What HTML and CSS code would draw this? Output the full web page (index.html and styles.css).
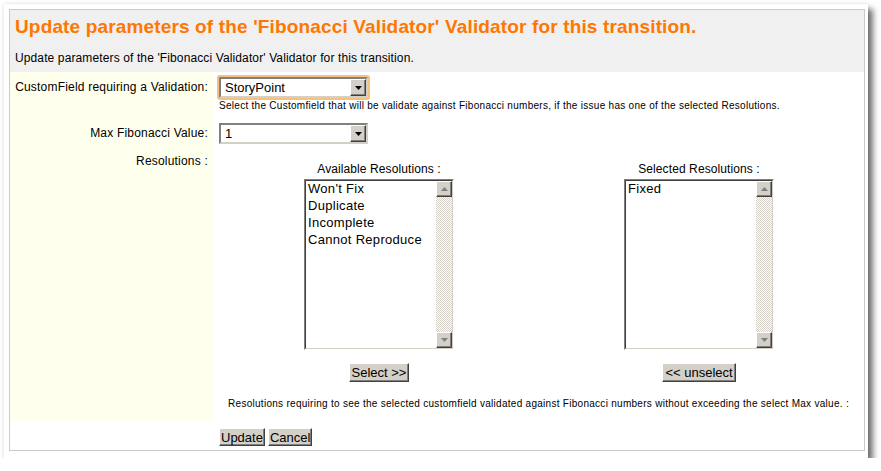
FILE: index.html
```html
<!DOCTYPE html>
<html lang="en">
<head>
  <meta charset="UTF-8">
  <title>Update parameters of the 'Fibonacci Validator' Validator</title>
  <link rel="stylesheet" href="styles.css">
</head>
<body>
  <div class="frame">
    <div class="panel">
      <div class="head">
        <h2 class="title">Update parameters of the 'Fibonacci Validator' Validator for this transition.</h2>
        <p class="desc">Update parameters of the 'Fibonacci Validator' Validator for this transition.</p>
      </div>

      <div class="form">
        <div class="label row-first">CustomField requiring a Validation:</div>
        <div class="value row-first">
          <div class="select focused">
            <span class="select-text">StoryPoint</span>
            <span class="drop"><svg width="7" height="4"><polygon points="0,0 7,0 3.5,4" fill="#000"/></svg></span>
          </div>
          <div class="help">Select the Customfield that will be validate against Fibonacci numbers, if the issue has one of the selected Resolutions.</div>
        </div>

        <div class="label row-max">Max Fibonacci Value:</div>
        <div class="value row-max">
          <div class="select">
            <span class="select-text">1</span>
            <span class="drop"><svg width="7" height="4"><polygon points="0,0 7,0 3.5,4" fill="#000"/></svg></span>
          </div>
        </div>

        <div class="label row-res">Resolutions :</div>
        <div class="value row-res">
          <div class="picker">
            <div class="pick-col">
              <div class="caption">Available Resolutions :</div>
              <div class="listbox">
                <div class="listbox-inner">
                  <ul class="options">
                    <li>Won't Fix</li>
                    <li>Duplicate</li>
                    <li>Incomplete</li>
                    <li>Cannot Reproduce</li>
                  </ul>
                  <div class="scroll">
                    <span class="sb-btn"><svg width="7" height="4"><polygon points="0,4 7,4 3.5,0" fill="#808080"/></svg></span>
                    <span class="sb-btn"><svg width="7" height="4"><polygon points="0,0 7,0 3.5,4" fill="#808080"/></svg></span>
                  </div>
                </div>
              </div>
              <button class="btn btn-move">Select &gt;&gt;</button>
            </div>
            <div class="pick-col">
              <div class="caption">Selected Resolutions :</div>
              <div class="listbox">
                <div class="listbox-inner">
                  <ul class="options">
                    <li>Fixed</li>
                  </ul>
                  <div class="scroll">
                    <span class="sb-btn"><svg width="7" height="4"><polygon points="0,4 7,4 3.5,0" fill="#808080"/></svg></span>
                    <span class="sb-btn"><svg width="7" height="4"><polygon points="0,0 7,0 3.5,4" fill="#808080"/></svg></span>
                  </div>
                </div>
              </div>
              <button class="btn btn-move">&lt;&lt; unselect</button>
            </div>
          </div>
          <div class="note">Resolutions requiring to see the selected customfield validated against Fibonacci numbers without exceeding the select Max value. :</div>
        </div>

        <div class="label label-plain"></div>
        <div class="value row-actions">
          <button class="btn">Update</button><button class="btn">Cancel</button>
        </div>
      </div>
    </div>
  </div>
</body>
</html>
```

FILE: styles.css
```css
body {
  margin: 0;
  background: #fff;
  font-family: "Liberation Sans", Arial, sans-serif;
  color: #000;
}
.frame {
  margin: 4px 0 0 4px;
  width: 864px;
  box-sizing: border-box;
  padding: 5px 3px 7px 5px;
  background: #fff;
  box-shadow: 5px 5px 6px rgba(0,0,0,0.55), 0 0 4px rgba(0,0,0,0.12);
}
.panel {
  border: 1px solid #cacaca;
}
.head {
  background: #f0f0f0;
  height: 62px;
  box-sizing: border-box;
  padding: 6px 5px 0;
}
.title {
  margin: 0;
  font-size: 19px;
  line-height: 22px;
  font-weight: bold;
  letter-spacing: 0.15px;
  color: #ff7700;
}
.desc {
  margin: 13px 0 0;
  font-size: 12px;
  line-height: 15px;
  letter-spacing: 0.12px;
}
.form {
  display: grid;
  grid-template-columns: 203px 1fr;
}
.label {
  background: #ffffee;
  text-align: right;
  font-size: 12px;
  line-height: 21px;
  letter-spacing: 0.2px;
  padding: 5px 5px 0 0;
}
.label-plain {
  background: #fff;
}
.value {
  padding: 5px 0 0 6px;
}
.row-first.value {
  padding-bottom: 6px;
}
.row-max.value {
  padding-bottom: 2px;
}
.row-res.value {
  padding: 16px 0 11px 6px;
}
.row-actions {
  display: flex;
  gap: 3px;
  padding: 7px 0 4px 6px;
}

/* dropdowns */
.select {
  display: flex;
  width: 149px;
  height: 21px;
  box-sizing: border-box;
  border: 2px solid;
  border-color: #808080 #d4d0c8 #d4d0c8 #808080;
  background: #fff;
  font-size: 13px;
}
.select.focused {
  outline: 2px solid #f3c27c;
  outline-offset: 0;
  border-radius: 1px;
}
.select-text {
  flex: 1;
  padding: 1px 0 0 4px;
  line-height: 16px;
}
.drop {
  width: 16px;
  box-sizing: border-box;
  display: flex;
  align-items: center;
  justify-content: center;
  background: #d4d0c8;
  border: 1px solid;
  border-color: #fff #404040 #404040 #fff;
  box-shadow: inset -1px -1px #808080;
}
.help, .note {
  font-size: 10px;
  line-height: 12px;
  letter-spacing: 0.28px;
}
.help {
  margin-top: 2px;
}

/* resolution pickers */
.picker {
  display: grid;
  grid-template-columns: 320px 320px;
}
.pick-col {
  display: flex;
  flex-direction: column;
  align-items: center;
}
.caption {
  font-size: 12px;
  line-height: 15px;
  letter-spacing: 0.1px;
  margin-bottom: 2px;
}
.listbox {
  width: 150px;
  height: 171px;
  box-sizing: border-box;
  border: 1px solid;
  border-color: #808080 #fff #fff #808080;
}
.listbox-inner {
  display: flex;
  height: 100%;
  box-sizing: border-box;
  border: 1px solid;
  border-color: #404040 #d4d0c8 #d4d0c8 #404040;
  background: #fff;
}
.options {
  flex: 1;
  margin: -1px 0 0;
  padding: 0 0 0 2px;
  list-style: none;
  font-size: 13px;
  line-height: 17px;
  letter-spacing: 0.3px;
}
.scroll {
  width: 16px;
  display: flex;
  flex-direction: column;
  justify-content: space-between;
  background: repeating-conic-gradient(#d4d0c8 0 25%, #fff 0 50%) 0 0 / 2px 2px;
}
.sb-btn {
  height: 16px;
  box-sizing: border-box;
  display: flex;
  align-items: center;
  justify-content: center;
  background: #d4d0c8;
  border: 1px solid;
  border-color: #fff #404040 #404040 #fff;
  box-shadow: inset -1px -1px #808080;
}
.btn {
  font-family: "Liberation Sans", Arial, sans-serif;
  font-size: 13px;
  line-height: 15px;
  height: 19px;
  padding: 0 2px;
  margin: 0;
  color: #000;
  background: #d4d0c8;
  border: 1px solid;
  border-color: #fff #404040 #404040 #fff;
  box-shadow: inset -1px -1px #808080;
  border-radius: 0;
}
.btn-move {
  margin-top: 13px;
}
.row-actions .btn {
  height: 18px;
  padding: 0 1px;
}
.note {
  margin-top: 16px;
  text-align: center;
  padding-right: 6px;
}
```
